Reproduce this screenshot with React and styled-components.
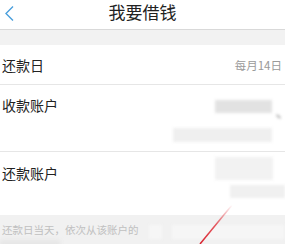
import { createGlobalStyle, styled } from "styled-components"

const Global = createGlobalStyle`
  html, body {
    margin: 0;
    padding: 0;
    background: #ffffff;
    font-family: "Noto Sans CJK SC", "Noto Sans", sans-serif;
  }
`

const Page = styled.div`
  position: relative;
  width: 285px;
  height: 244px;
  overflow: hidden;
  background: #f1f1f1;
`

const Header = styled.header`
  display: grid;
  grid-template-columns: 30px 1fr 30px;
  align-items: center;
  height: 29px;
  background: #fff;
  border-bottom: 1px solid #d9d9d9;
`

const Back = styled.div`
  display: flex;
  align-items: center;
  padding-left: 4px;
  height: 29px;
  margin-top: -3px;
`

const Title = styled.h1`
  margin: 0;
  text-align: center;
  font-size: 17px;
  font-weight: 400;
  color: #222;
  line-height: 24px;
  margin-top: -5px;
`

const Band = styled.div`
  height: 15px;
  background: #f2f2f2;
`

const Row = styled.div`
  display: flex;
  justify-content: space-between;
  align-items: ${p => (p.$center ? "center" : "flex-start")};
  height: ${p => p.$h}px;
  padding: 0 ${p => p.$pr || 3}px 0 2px;
  background: #fff;
  border-bottom: ${p => (p.$last ? "none" : "1px solid #e6e6e6")};
  box-sizing: border-box;
`

const Label = styled.span`
  font-size: 14px;
  line-height: 20px;
  color: #222;
  padding-top: ${p => p.$top || 0}px;
`

const Value = styled.span`
  font-size: 11.5px;
  color: #9a9a9a;
`

const Masked = styled.div`
  display: flex;
  flex-direction: column;
  align-items: flex-end;
  gap: ${p => p.$gap}px;
  padding-top: ${p => p.$top}px;
`

const Blur = styled.div`
  position: relative;
  width: ${p => p.$w}px;
  height: ${p => p.$h}px;
  margin-right: ${p => p.$mr || 0}px;
  background: ${p => p.$c || "#e4e4e4"};
  filter: blur(1.5px);
`

const Tick = styled.span`
  position: absolute;
  right: -9px;
  bottom: -4px;
  width: 5px;
  height: 1px;
  background: #666;
  transform: rotate(40deg);
`

const Note = styled.div`
  display: flex;
  align-items: flex-start;
  gap: 10px;
  padding: 8px 0 0 2px;
  height: 29px;
  box-sizing: border-box;
`

const NoteText = styled.span`
  font-size: 10.5px;
  line-height: 14px;
  color: #c0c0c0;
  white-space: nowrap;
`

const NoteBlurs = styled.div`
  display: flex;
  gap: 10px;
  padding-top: 2px;
`

const Corner = styled.div`
  width: 60px;
  height: 10px;
  margin-top: -4px;
  background: #e6e6e6;
  filter: blur(2px);
`

const Mark = styled.svg`
  position: absolute;
  left: 195px;
  top: 200px;
`

export default function App() {
  return (
    <Page>
      <Global />
      <Header>
        <Back>
          <svg width="11" height="17" viewBox="0 0 11 17">
            <path d="M9 1.5 L2 8.5 L9 15.5" fill="none" stroke="#4a9fdc" strokeWidth="1.4" />
          </svg>
        </Back>
        <Title>我要借钱</Title>
        <span />
      </Header>
      <Band />
      <Row $h={40} $center>
        <Label>还款日</Label>
        <Value>每月14日</Value>
      </Row>
      <Row $h={67} $pr={13}>
        <Label $top={10}>收款账户</Label>
        <Masked $top={15} $gap={15}>
          <Blur $w={57} $h={13} $c="#e2e2e2">
            <Tick />
          </Blur>
          <Blur $w={99} $h={14} $c="#efefef" />
        </Masked>
      </Row>
      <Row $h={63} $pr={12} $last>
        <Label $top={11}>还款账户</Label>
        <Masked $top={5} $gap={5}>
          <Blur $w={58} $h={23} $c="#f2f2f2" />
          <Blur $w={55} $h={13} $mr={-12} $c="#f0f0f0" />
        </Masked>
      </Row>
      <Note>
        <NoteText>还款日当天，依次从该账户的</NoteText>
        <NoteBlurs>
          <Blur $w={13} $h={14} $c="#f6f6f6" />
          <Blur $w={112} $h={14} $c="#f6f6f6" />
        </NoteBlurs>
      </Note>
      <Corner />
      <Mark width="40" height="44" viewBox="0 0 40 44">
        <defs>
          <linearGradient id="redfade" x1="0" y1="0" x2="0" y2="1">
            <stop offset="0" stopColor="#e0303a" stopOpacity="0" />
            <stop offset="0.5" stopColor="#e0303a" stopOpacity="0.8" />
            <stop offset="1" stopColor="#d8202c" />
          </linearGradient>
        </defs>
        <line x1="37" y1="5" x2="5" y2="44" stroke="url(#redfade)" strokeWidth="1.5" />
      </Mark>
    </Page>
  )
}
